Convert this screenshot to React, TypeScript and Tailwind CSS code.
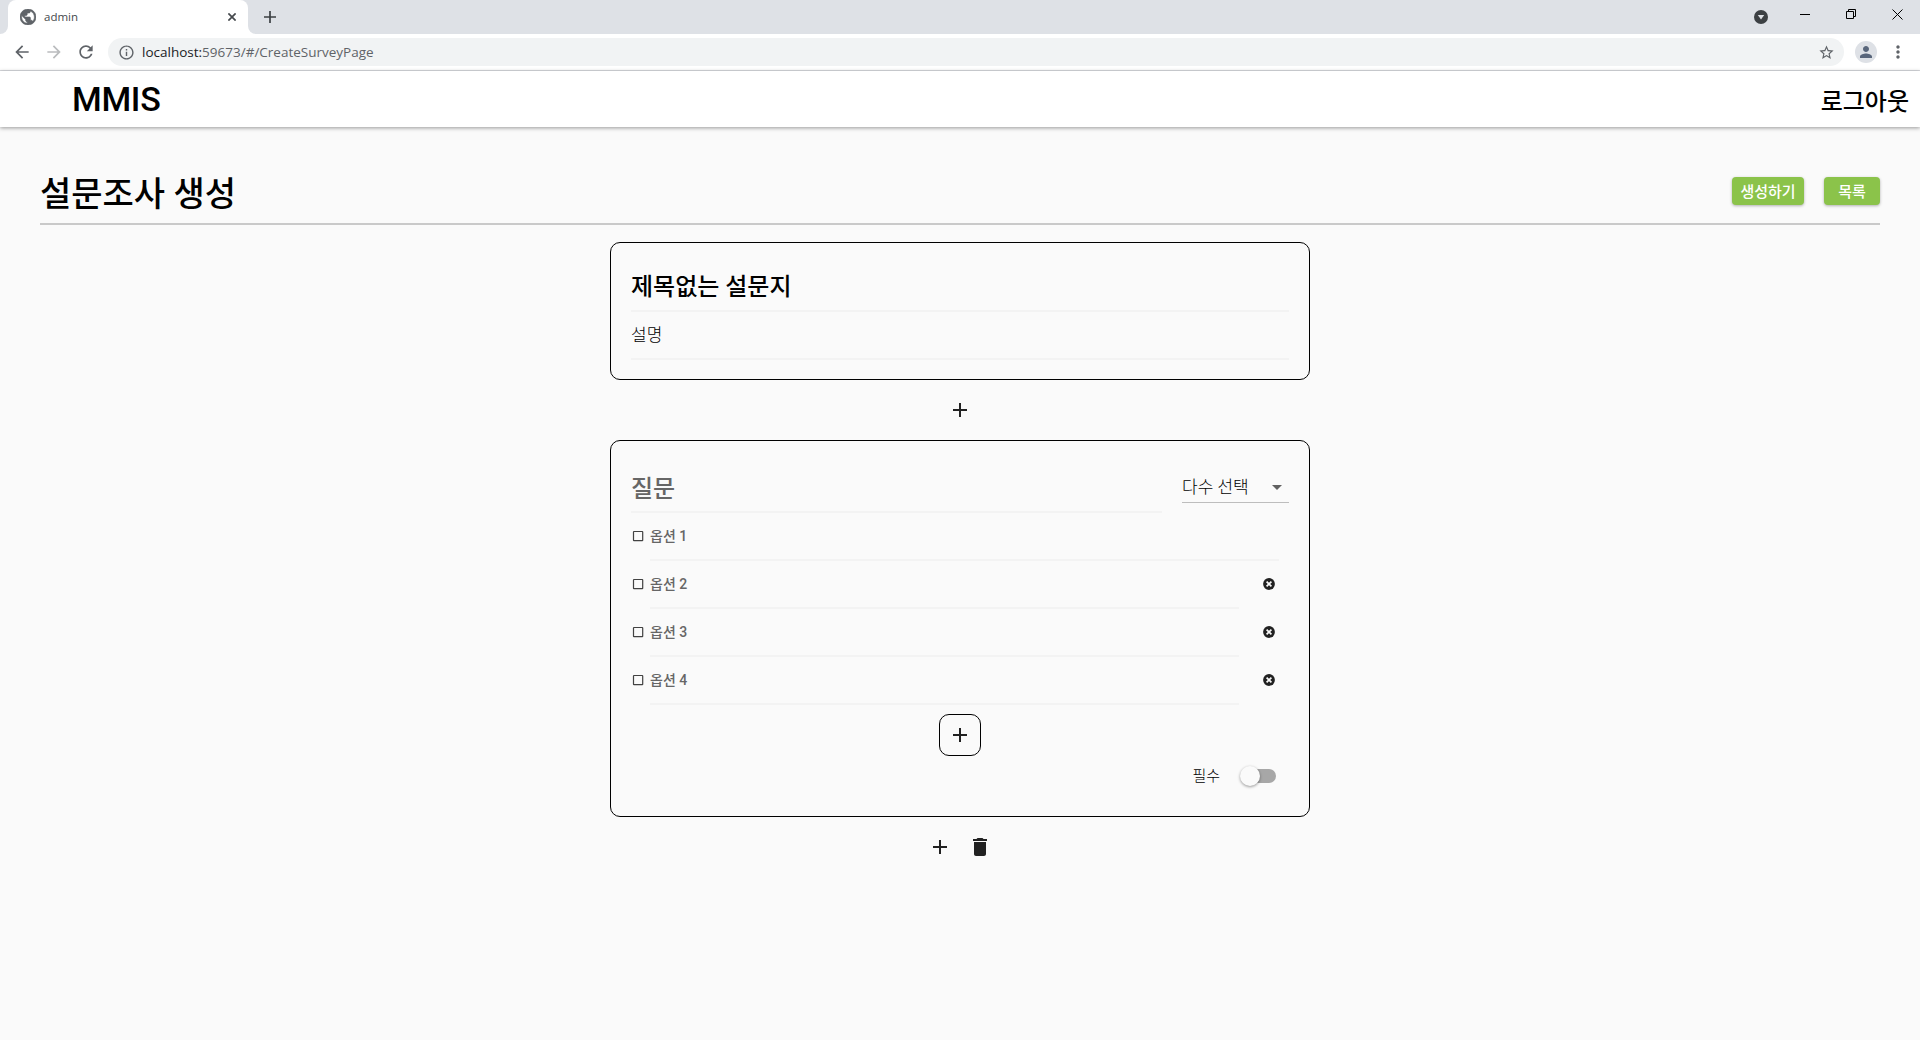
import React from "react";

const Svg = ({ d, size = 24, className = "" }: { d: string; size?: number; className?: string }) => (
  <svg viewBox="0 0 24 24" width={size} height={size} fill="currentColor" className={`shrink-0 ${className}`}>
    <path d={d} />
  </svg>
);

const ADD = "M19 13h-6v6h-2v-6H5v-2h6V5h2v6h6v2z";
const DELETE = "M6 19c0 1.1.9 2 2 2h8c1.1 0 2-.9 2-2V7H6v12zM19 4h-3.5l-1-1h-5l-1 1H5v2h14V4z";
const BACK = "M20 11H7.83l5.59-5.59L12 4l-8 8 8 8 1.41-1.41L7.83 13H20v-2z";
const FORWARD = "M12 4l-1.41 1.41L16.17 11H4v2h12.17l-5.58 5.59L12 20l8-8z";
const REFRESH =
  "M17.65 6.35C16.2 4.9 14.21 4 12 4c-4.42 0-7.99 3.58-7.99 8s3.57 8 7.99 8c3.73 0 6.84-2.55 7.73-6h-2.08c-.82 2.33-3.04 4-5.65 4-3.31 0-6-2.69-6-6s2.69-6 6-6c1.66 0 3.14.69 4.22 1.78L13 11h7V4l-2.35 2.35z";
const INFO =
  "M11 7h2v2h-2zm0 4h2v6h-2zm1-9C6.48 2 2 6.48 2 12s4.48 10 10 10 10-4.48 10-10S17.52 2 12 2zm0 18c-4.41 0-8-3.59-8-8s3.59-8 8-8 8 3.59 8 8-3.59 8-8 8z";
const GLOBE =
  "M12 2C6.48 2 2 6.48 2 12s4.48 10 10 10 10-4.48 10-10S17.52 2 12 2zm-1 17.93c-3.95-.49-7-3.85-7-7.93 0-.62.08-1.21.21-1.79L9 15v1c0 1.1.9 2 2 2v1.93zm6.9-2.54c-.26-.81-1-1.39-1.9-1.39h-1v-3c0-.55-.45-1-1-1H8v-2h2c.55 0 1-.45 1-1V7h2c1.1 0 2-.9 2-2v-.41c2.93 1.19 5 4.06 5 7.41 0 2.08-.8 3.97-2.1 5.39z";
const STAR =
  "M22 9.24l-7.19-.62L12 2 9.19 8.63 2 9.24l5.46 4.73L5.82 21 12 17.27 18.18 21l-1.63-7.03L22 9.24zM12 15.4l-3.76 2.27 1-4.28-3.32-2.88 4.38-.38L12 6.1l1.71 4.04 4.38.38-3.32 2.88 1 4.28L12 15.4z";
const PERSON = "M12 12c2.21 0 4-1.79 4-4s-1.79-4-4-4-4 1.79-4 4 1.79 4 4 4zm0 2c-2.67 0-8 1.34-8 4v2h16v-2c0-2.66-5.33-4-8-4z";
const MORE =
  "M12 8c1.1 0 2-.9 2-2s-.9-2-2-2-2 .9-2 2 .9 2 2 2zm0 2c-1.1 0-2 .9-2 2s.9 2 2 2 2-.9 2-2-.9-2-2-2zm0 6c-1.1 0-2 .9-2 2s.9 2 2 2 2-.9 2-2-.9-2-2-2z";

function TabStrip() {
  return (
    <div className="flex h-[34px] bg-[#dee1e6]">
      <div className="w-2 bg-white">
        <div className="h-full w-full rounded-br-lg bg-[#dee1e6]" />
      </div>
      <div className="flex h-[34px] w-[240px] items-center rounded-t-lg bg-white pr-[12px] pl-3">
        <svg width="16" height="16" viewBox="2 2 20 20" className="shrink-0">
          <circle cx="12" cy="12" r="10" fill="#fff" />
          <path d={GLOBE} fill="#5f6368" stroke="#5f6368" strokeWidth="0.8" />
        </svg>
        <span className="ml-[8px] flex-1 text-[11.5px] leading-none text-[#45494d]">admin</span>
        <svg width="8" height="8" viewBox="0 0 8 8" stroke="#45494d" strokeWidth="1.7">
          <path d="M.4.4l7.200 7.200M7.600.4l-7.200 7.200" />
        </svg>
      </div>
      <div className="w-2 bg-white">
        <div className="h-full w-full rounded-bl-lg bg-[#dee1e6]" />
      </div>
      <svg width="12" height="12" viewBox="0 0 12 12" className="mt-[11px] ml-[8px]" stroke="#3c4043" strokeWidth="1.7">
        <path d="M6 0v12M0 6h12" />
      </svg>
      <div className="flex flex-1 items-start justify-end text-black">
        <svg width="14" height="14" viewBox="0 0 14 14" className="mt-[10px] mr-[32px]">
          <circle cx="7" cy="7" r="7" fill="#3c4043" />
          <path d="M3.8 5h6.4L7 9.6z" fill="#dee1e6" />
        </svg>
        <svg width="10" height="10" viewBox="0 0 10 10" className="mt-[9px] mr-[36px]">
          <path d="M0 5.5h10" stroke="currentColor" />
        </svg>
        <svg width="10" height="10" viewBox="0 0 10 10" className="mt-[9px] mr-[36px]" fill="none" stroke="currentColor">
          <path d="M.5 2.5h7v7h-7zM2.500 2.500v-2h7v7h-2" />
        </svg>
        <svg width="11" height="11" viewBox="0 0 11 11" className="mt-[9px] mr-[17px]" stroke="currentColor">
          <path d="M.5.5l10 10M10.500.5l-10 10" />
        </svg>
      </div>
    </div>
  );
}

function AddressBar() {
  return (
    <div className="flex h-[37px] items-center border-b border-[#dadce0] bg-white text-[#5f6368]">
      <Svg d={BACK} size={20} className="ml-[12px]" />
      <Svg d={FORWARD} size={20} className="ml-[12px] text-[#babcbe]" />
      <Svg d={REFRESH} size={20} className="ml-[12px]" />
      <div className="ml-[12px] flex h-7 flex-1 items-center rounded-full bg-[#f1f3f4] pr-[9px] pl-[10px]">
        <Svg d={INFO} size={17} />
        <span className="mt-px ml-[7px] flex-1 text-[13.5px] leading-none">
          <span className="text-[#202124]">localhost:</span>59673/#/CreateSurveyPage
        </span>
        <Svg d={STAR} size={17} />
      </div>
      <div className="ml-[11px] flex size-[22px] items-center justify-center rounded-full bg-[#dee1e6]">
        <Svg d={PERSON} size={18} className="text-[#59667b]" />
      </div>
      <Svg d={MORE} size={20} className="mr-[12px] ml-[11px]" />
    </div>
  );
}

function ActionButton({ label, width }: { label: string; width: string }) {
  return (
    <button
      className={`h-7 rounded-[4px] bg-[#8bc34a] pt-[3px] text-[15px] leading-none font-medium text-white shadow-[0_1px_3px_rgba(0,0,0,0.3)] ${width}`}
    >
      {label}
    </button>
  );
}

function OptionRow({ index }: { index: number }) {
  const removable = index > 1;
  return (
    <div className="flex h-12 items-start">
      <svg width="14" height="14" viewBox="0 0 14 14" className="mt-[16px] shrink-0" fill="none" stroke="#424242">
        <rect x="2.500" y="2.500" width="9.200" height="9.200" rx="0.5" strokeWidth="1.200" />
      </svg>
      <div
        className={`ml-[5px] flex h-12 items-center border-b-2 border-[#f3f3f3] pt-px text-[14px] font-medium text-[#666] ${
          removable ? "w-[589px]" : "w-[629px]"
        }`}
      >
        옵션 {index}
      </div>
      {removable && (
        <svg width="12" height="12" viewBox="0 0 12 12" className="mt-[17px] ml-[24px] shrink-0">
          <circle cx="6" cy="6" r="5.900" fill="#212121" />
          <path d="M3.600 3.600l4.800 4.800M8.400 3.600l-4.800 4.800" stroke="#fafafa" strokeWidth="1.700" />
        </svg>
      )}
    </div>
  );
}

export default function App() {
  return (
    <div className="flex h-[1040px] w-[1920px] flex-col overflow-hidden bg-[#fafafa]">
      <div className="font-['Open_Sans','Noto_Sans_CJK_KR',sans-serif]">
        <TabStrip />
        <AddressBar />
      </div>
      <div className="flex flex-1 flex-col font-[Roboto,'Noto_Sans_CJK_KR',sans-serif] text-black">
        <header className="flex h-14 items-center justify-between bg-white pr-[11px] pl-[72px] shadow-[0_1px_4px_rgba(0,0,0,0.4)]">
          <span className="text-[34px] leading-none font-medium tracking-[-0.3px]">MMIS</span>
          <span className="mt-[6px] text-[24px] leading-none font-medium">로그아웃</span>
        </header>
        <main className="flex flex-col px-10">
          <div className="flex h-[98px] items-end justify-between border-b-2 border-[#c9c9c9]">
            <h1 className="mb-[12px] text-[34px] leading-none font-medium">설문조사 생성</h1>
            <div className="mb-[18px] flex gap-5">
              <ActionButton label="생성하기" width="w-[72px]" />
              <ActionButton label="목록" width="w-[56px]" />
            </div>
          </div>
          <div className="mt-[17px] flex flex-col items-center">
            <section className="h-[138px] w-[700px] rounded-[10px] border border-black px-5 pt-[19px]">
              <div className="flex h-[50px] items-center border-b-2 border-[#f3f3f3] pt-[2px] text-[24px] font-medium">
                제목없는 설문지
              </div>
              <div className="flex h-12 items-center border-b-2 border-[#f3f3f3] pt-px text-[17px] font-light text-black">
                설명
              </div>
            </section>
            <Svg d={ADD} className="mt-[18px] mb-[18px] text-[#212121]" />
            <section className="flex h-[377px] w-[700px] flex-col rounded-[10px] border border-black px-5 pt-5">
              <div className="flex h-[52px] justify-between">
                <div className="flex w-[531px] items-center border-b-2 border-[#f3f3f3] pt-[5px] text-[24px] font-medium text-[#666]">
                  질문
                </div>
                <div className="flex h-[42px] w-[107px] items-center justify-between border-b border-[#bdbdbd] pt-[11px] text-[17px] font-light text-black">
                  <span className="mt-px">다수 선택</span>
                  <Svg d="M7 10l5 5 5-5z" className="text-[#616161]" />
                </div>
              </div>
              {[1, 2, 3, 4].map((n) => (
                <OptionRow key={n} index={n} />
              ))}
              <button className="mt-[9px] flex size-[42px] items-center justify-center self-center rounded-[10px] border border-black text-[#212121]">
                <Svg d={ADD} />
              </button>
              <div className="mt-[10px] mr-[13px] flex items-center self-end">
                <span className="text-[15px] leading-5 font-light text-black">필수</span>
                <div className="ml-[23px] flex h-[14px] w-[33px] items-center rounded-full bg-[#a7a7a7]">
                  <div className="-ml-[3px] size-5 rounded-full bg-[#fafafa] shadow-[0_1px_3px_rgba(0,0,0,0.4)]" />
                </div>
              </div>
            </section>
            <div className="mt-[18px] flex gap-4 text-[#212121]">
              <Svg d={ADD} />
              <Svg d={DELETE} />
            </div>
          </div>
        </main>
      </div>
    </div>
  );
}
